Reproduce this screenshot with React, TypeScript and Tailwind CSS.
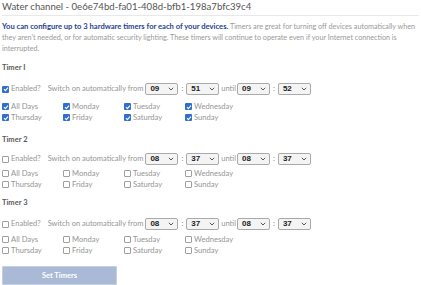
import React from "react";

const FONT = { fontFamily: "Lato, 'Open Sans', sans-serif" };

function Box({ checked }: { checked: boolean }) {
  if (checked) {
    return (
      <span className="inline-flex h-[7px] w-[7px] shrink-0 items-center justify-center rounded-[1px] bg-[#2f6fd0]">
        <svg width="6" height="6" viewBox="0 0 6 6">
          <path d="M1 3.2 L2.4 4.6 L5 1.6" stroke="white" strokeWidth="1.1" fill="none" />
        </svg>
      </span>
    );
  }
  return <span className="inline-block h-[7px] w-[7px] shrink-0 rounded-[1px] border border-[#a0a0a0] bg-white" />;
}

function Sel({ v }: { v: string }) {
  return (
    <span className="inline-flex h-[12px] w-[33px] items-center justify-between rounded-[2px] border border-[#aaaaaa] bg-[#f4f4f4] pl-[4px] pr-[3px]">
      <span className="text-[8px] font-semibold text-[#222]" style={{ fontFamily: "'Liberation Sans', Arial, sans-serif" }}>{v}</span>
      <svg width="6" height="4" viewBox="0 0 6 4">
        <path d="M0.8 0.8 L3 3 L5.2 0.8" stroke="#444" strokeWidth="0.9" fill="none" />
      </svg>
    </span>
  );
}

const DAYS = ["All Days", "Monday", "Tuesday", "Wednesday", "Thursday", "Friday", "Saturday", "Sunday"];

function Timer({
  n,
  checked,
  t,
  labelMt,
  rowMt,
  daysMt,
}: {
  n: string;
  checked: boolean;
  t: [string, string, string, string];
  labelMt: string;
  rowMt: string;
  daysMt: string;
}) {
  return (
    <div>
      <div className={`${labelMt} text-[7.5px] font-bold leading-[10px] text-[#5a5a5a]`}>Timer {n}</div>
      <div className={`${rowMt} flex h-[12px] items-center text-[7.5px] text-[#959595]`}>
        <Box checked={checked} />
        <span className="ml-[2px]">Enabled?</span>
        <span className="ml-[7px]">Switch on automatically from</span>
        <span className="ml-[2px]">
          <Sel v={t[0]} />
        </span>
        <span className="mx-[3px] text-[#777]">:</span>
        <Sel v={t[1]} />
        <span className="ml-[2px] mr-[1px]">until</span>
        <Sel v={t[2]} />
        <span className="mx-[3px] text-[#777]">:</span>
        <Sel v={t[3]} />
      </div>
      <div className={`${daysMt} grid w-[244px] grid-cols-4 text-[7.6px] leading-[11px] text-[#959595]`}>
        {DAYS.map((d) => (
          <div key={d} className="flex items-center">
            <Box checked={checked} />
            <span className="ml-[2px]">{d}</span>
          </div>
        ))}
      </div>
    </div>
  );
}

export default function App() {
  return (
    <div className="h-[285px] w-[421px] overflow-hidden bg-white px-[2px]" style={FONT}>
      <div className="h-[16px] border-b border-[#e8e8e8] text-[9.6px] leading-[13px] text-[#555]">
        Water channel - 0e6e74bd-fa01-408d-bfb1-198a7bfc39c4
      </div>
      <p className="mt-[5px] pr-[2px] text-[7.2px] leading-[11px] text-[#999]">
        <span className="text-[7.6px] font-bold text-[#1f3f8f]">You can configure up to 3 hardware timers for each of your devices.</span>{" "}
        Timers are great for turning off devices automatically when they aren't needed, or for automatic security lighting. These timers will continue to operate even if your Internet connection is interrupted.
      </p>
      <Timer n="I" checked t={["09", "51", "09", "52"]} labelMt="mt-[9px]" rowMt="mt-[10px]" daysMt="mt-[6px]" />
      <Timer n="2" checked={false} t={["08", "37", "08", "37"]} labelMt="mt-[12px]" rowMt="mt-[8px]" daysMt="mt-[3px]" />
      <Timer n="3" checked={false} t={["08", "37", "08", "37"]} labelMt="mt-[8px]" rowMt="mt-[10px]" daysMt="mt-[4px]" />
      <button className="mt-[10px] flex h-[19px] w-[115px] items-center justify-center rounded-[1px] border border-[#c4cfe2] bg-[#aab9d6] text-[7.5px] font-bold text-white">
        Set Timers
      </button>
    </div>
  );
}
